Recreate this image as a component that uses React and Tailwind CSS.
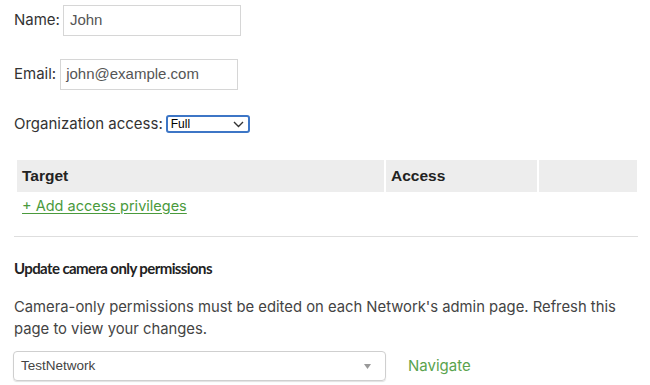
export default function App() {
    return (
        <div className="w-[650px] h-[385px] overflow-hidden bg-white text-[#333] text-[15px] font-[Inter,'Liberation_Sans',sans-serif]">
            <div className="pl-[14px] pr-[12px] pt-[5px]">

                {/* User fields */}
                <div className="flex items-center h-[31px]">
                    <span>Name:</span>
                    <div className="ml-[3px] w-[178px] h-[31px] border border-[#d6d6d6] flex items-center px-[6px] text-[#555] font-['Liberation_Sans',Arial,sans-serif]">John</div>
                </div>
                <div className="flex items-center h-[31px] mt-[23px]">
                    <span>Email:</span>
                    <div className="ml-[4px] w-[178px] h-[31px] border border-[#d6d6d6] flex items-center px-[5px] text-[#555] font-['Liberation_Sans',Arial,sans-serif]">john@example.com</div>
                </div>
                <div className="flex items-center h-[18px] mt-[25px]">
                    <span>Organization access:</span>
                    <div className="ml-[3px] w-[84px] h-[18px] border-2 border-[#3d76c6] rounded-[3px] flex items-center justify-between pl-[3px] pr-[4px] text-[12px] text-black font-['Liberation_Sans',Arial,sans-serif]">
                        <span>Full</span>
                        <svg width="11" height="7" viewBox="0 0 11 7" fill="none" stroke="#333" strokeWidth="1.4"><path d="M1 1l4.5 4.5L10 1" /></svg>
                    </div>
                </div>

                {/* Privileges table */}
                <div className="mt-[27px] ml-[3px] w-[620px] flex gap-[2px] h-[32px] font-bold text-[#222] text-[15.5px] font-['Liberation_Sans',Arial,sans-serif]">
                    <div className="w-[367px] bg-[#ededed] flex items-center pl-[5px]">Target</div>
                    <div className="w-[151px] bg-[#ededed] flex items-center pl-[5px]">Access</div>
                    <div className="flex-1 bg-[#ededed]"></div>
                </div>
                <a href="#" className="block ml-[8px] mt-[5px] text-[14.5px] text-[#4a9a3c] underline underline-offset-2 leading-[18px]">+ Add access privileges</a>

                <div className="mt-[21px] border-t border-[#dedede] w-[624px]"></div>

                {/* Camera permissions */}
                <h3 className="mt-[22px] font-bold text-[#222] text-[15px] tracking-[-0.6px] leading-[18px] font-[Lato,sans-serif]">Update camera only permissions</h3>
                <p className="mt-[19px] leading-[22px] text-[#444] text-[14.8px] w-[615px]">
                    Camera-only permissions must be edited on each Network's admin page. Refresh this page to view your changes.
                </p>
                <div className="flex items-center mt-[11px]">
                    <div className="-ml-[1px] w-[373px] h-[30px] border border-[#cfcfcf] rounded-[4px] shadow-[0_1px_1px_rgba(0,0,0,0.12)] flex items-center justify-between pl-[7px] pr-[14px] text-[#444] text-[13.5px] font-['Liberation_Sans',Arial,sans-serif]">
                        <span>TestNetwork</span>
                        <svg width="7" height="5" viewBox="0 0 7 5"><path d="M0 0h7L3.5 5z" fill="#999" /></svg>
                    </div>
                    <a href="#" className="ml-[22px] text-[#5aa34d]">Navigate</a>
                </div>
            </div>
        </div>
    );
}
